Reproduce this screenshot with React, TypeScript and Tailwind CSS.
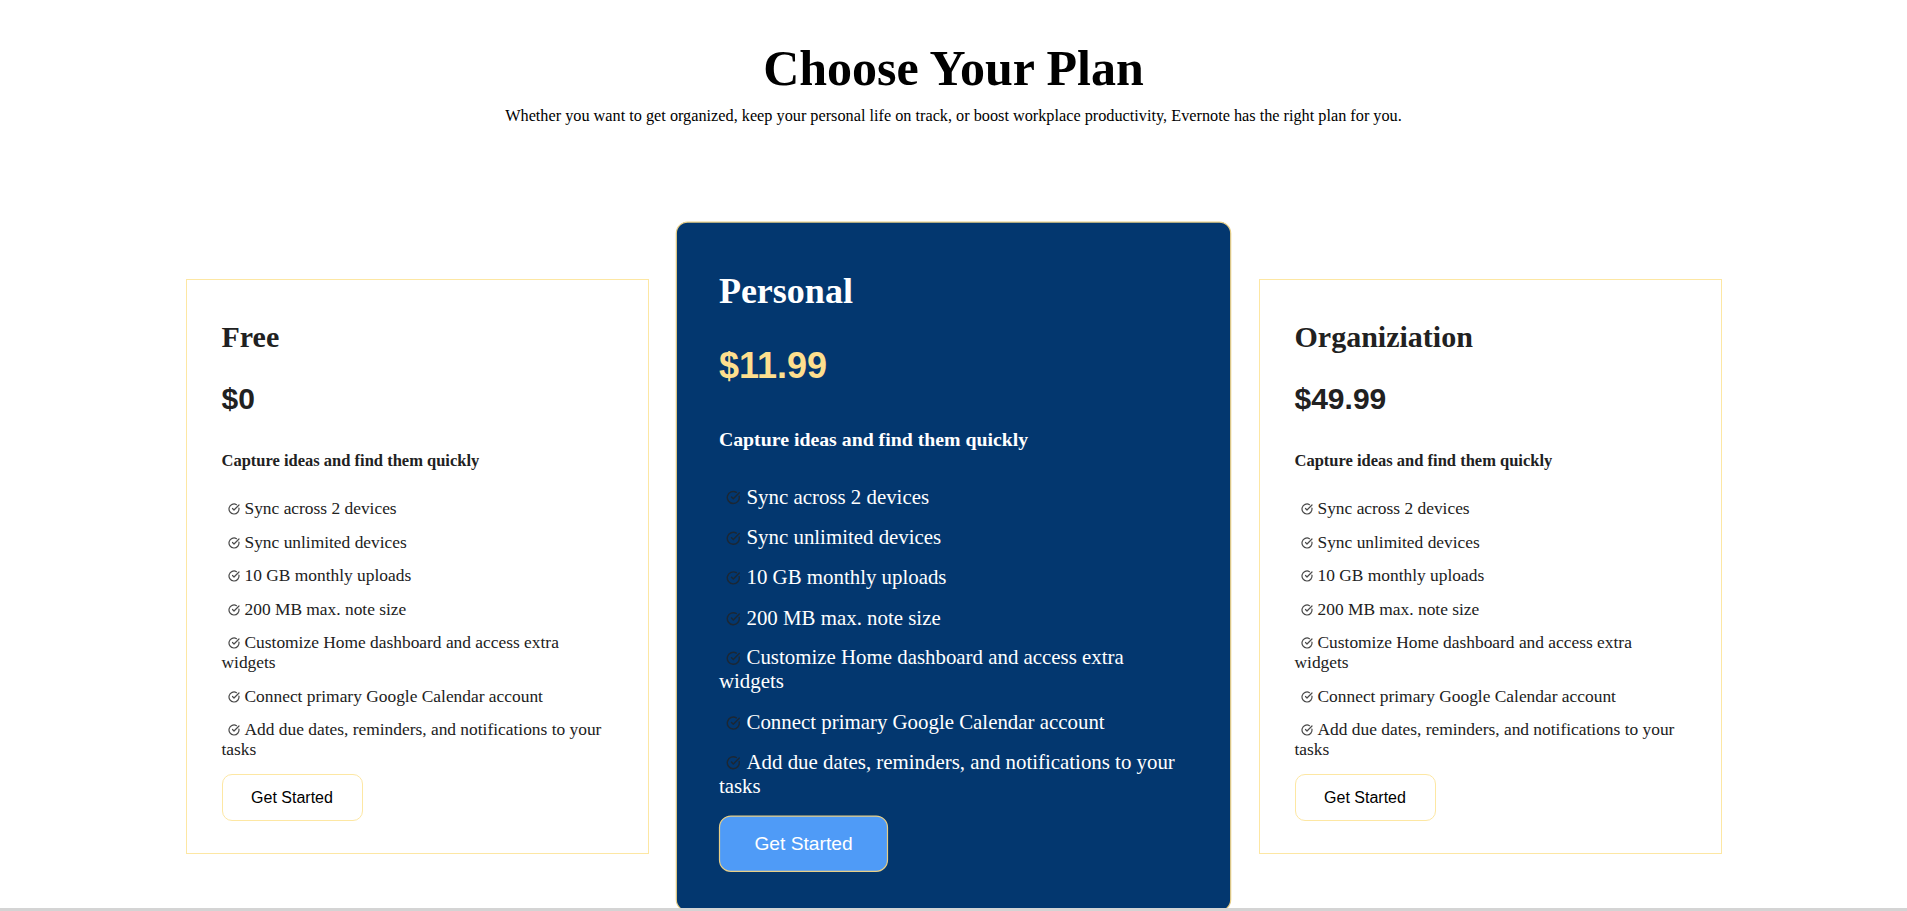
import { CircleCheckBig } from "lucide-react";

interface Plan {
    name: string;
    price: string;
    featured?: boolean;
}

const plans: Plan[] = [
    { name: "Free", price: "$0" },
    { name: "Personal", price: "$11.99", featured: true },
    { name: "Organiziation", price: "$49.99" },
];

const features = [
    "Sync across 2 devices",
    "Sync unlimited devices",
    "10 GB monthly uploads",
    "200 MB max. note size",
    "Customize Home dashboard and access extra widgets",
    "Connect primary Google Calendar account",
    "Add due dates, reminders, and notifications to your tasks",
];

const PlanCard = ({ plan }: { plan: Plan }) => {
    const featured = plan.featured;

    return (
        <div
            className={`w-[463px] border px-[35px] pt-[39px] pb-[32px] ${
                featured
                    ? "bg-[#03376f] border-[#e9cf86] rounded-[10px] scale-[1.2] text-white"
                    : "bg-white border-[#fde7a3] text-[#212121]"
            }`}
        >
            <h2 className="text-[30px] leading-[36px] font-bold">{plan.name}</h2>

            <p
                className={`mt-[26px] text-[30px] leading-[36px] font-bold font-['Liberation_Sans',Arial,sans-serif] ${
                    featured ? "text-[#fddf8e]" : "text-[#212121]"
                }`}
            >
                {plan.price}
            </p>

            <h3 className="mt-[34px] text-[16.5px] leading-[20px] font-bold">Capture ideas and find them quickly</h3>

            <ul className="mt-[27px] flex flex-col gap-[13.5px] text-[17.4px] leading-[20px]">
                {features.map((f) => (
                    <li key={f}>
                        <CircleCheckBig
                            size={12}
                            strokeWidth={2.4}
                            className={`inline-block ml-[6px] mr-[5px] align-[-1px] ${
                                featured ? "text-[#1c2733]" : "text-[#4a4a4a]"
                            }`}
                        />
                        {f}
                    </li>
                ))}
            </ul>

            <button
                className={`mt-[15px] w-[141px] h-[47px] flex items-center justify-center rounded-[10px] border text-[16px] font-['Liberation_Sans',Arial,sans-serif] ${
                    featured
                        ? "bg-[#4f9bf7] border-[#e9cf86] text-white"
                        : "bg-white border-[#fde7a3] text-black"
                }`}
            >
                Get Started
            </button>
        </div>
    );
};

export default function App() {
    return (
        <div className="h-screen overflow-hidden bg-white font-['Liberation_Serif','Times_New_Roman',serif] text-black">
            <div className="text-center">
                <h1 className="pt-[40px] text-[50px] leading-[56px] font-bold">Choose Your Plan</h1>
                <p className="mt-[10px] text-[16.25px] leading-[20px]">
                    Whether you want to get organized, keep your personal life on track, or boost workplace productivity, Evernote has the right plan for you.
                </p>
            </div>

            <div className="mt-[153px] w-[1536px] mx-auto flex justify-between items-center">
                {plans.map((p) => (
                    <PlanCard key={p.name} plan={p} />
                ))}
            </div>

            <div className="fixed bottom-0 left-0 right-0 h-[3px] bg-[#d4d4d4]" />
        </div>
    );
}
